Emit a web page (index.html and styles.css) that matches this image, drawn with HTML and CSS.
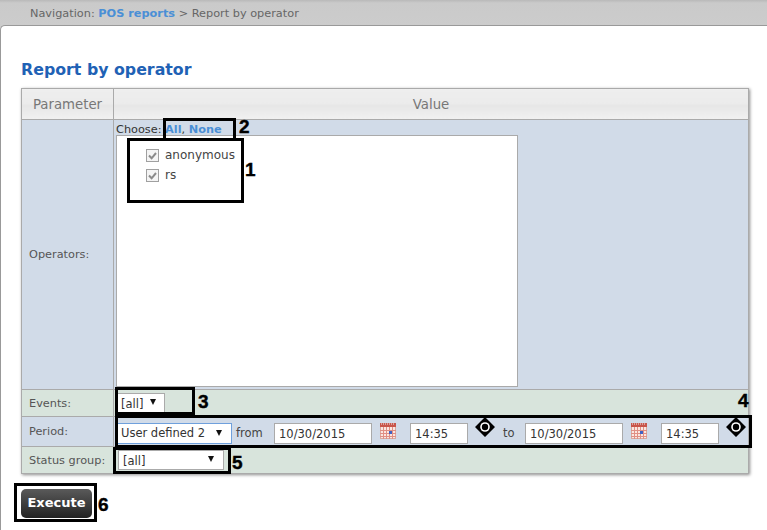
FILE: index.html
```html
<!DOCTYPE html>
<html lang="en">
<head>
  <meta charset="UTF-8">
  <title>Report by operator</title>
  <link rel="stylesheet" href="styles.css">
</head>
<body>
  <svg class="defs" width="0" height="0">
    <symbol id="calendar" viewBox="0 0 16 16">
      <rect x="0.5" y="0.5" width="15" height="15" fill="#fbe6e0" stroke="#d9a9a0"/>
      <rect x="0" y="0" width="16" height="4" fill="#c8554a"/>
      <path d="M1 1h1M3 1h1M5 1h1M7 1h1M9 1h1M11 1h1M13 1h1" stroke="#eee" stroke-width="1"/>
      <path d="M0 7.5h16M0 10.5h16M0 13.5h16M3.5 4v12M6.5 4v12M9.5 4v12M12.5 4v12" stroke="#e08f84" stroke-width="1"/>
      <rect x="9" y="8" width="3" height="3" fill="#3f63c4"/>
    </symbol>
    <symbol id="move" viewBox="0 0 20 20">
      <path d="M10 0l6 6H4zM10 20l-6-6h12zM0 10l6-6v12zM20 10l-6 6V4z" fill="#000"/>
      <circle cx="10" cy="10" r="6.5" fill="#000"/>
      <circle cx="10" cy="10" r="4.8" fill="#fff"/>
      <circle cx="10" cy="10" r="3.2" fill="#000"/>
    </symbol>
    <symbol id="check" viewBox="0 0 13 13">
      <rect x="0.5" y="0.5" width="12" height="12" fill="#f4f4f4" stroke="#a0a0a0"/>
      <path d="M3 6.5l2.6 2.8L10 4" fill="none" stroke="#8a8a8a" stroke-width="2"/>
    </symbol>
  </svg>

  <div class="topbar">
    Navigation: <a href="#">POS reports</a> &gt; Report by operator
  </div>

  <div class="content">
    <h1>Report by operator</h1>

    <table class="report">
      <tr class="head">
        <th class="col-name">Parameter</th>
        <th>Value</th>
      </tr>
      <tr class="row-blue row-operators">
        <td class="col-name">Operators:</td>
        <td class="operators-cell">
          <div class="choose">Choose: <a href="#">All</a>, <a href="#">None</a></div>
          <div class="operators-list">
            <label class="operator"><svg class="check"><use href="#check"/></svg>anonymous</label>
            <label class="operator"><svg class="check"><use href="#check"/></svg>rs</label>
          </div>
        </td>
      </tr>
      <tr class="row-green row-events">
        <td class="col-name">Events:</td>
        <td><span class="select select-events">[all]</span></td>
      </tr>
      <tr class="row-blue row-period">
        <td class="col-name">Period:</td>
        <td>
          <div class="period">
            <span class="select select-period">User defined 2</span>
            <span class="word-from">from</span>
            <input class="field field-date" value="10/30/2015">
            <svg class="calendar"><use href="#calendar"/></svg>
            <input class="field field-time" value="14:35">
            <svg class="move"><use href="#move"/></svg>
            <span class="word-to">to</span>
            <input class="field field-date" value="10/30/2015">
            <svg class="calendar"><use href="#calendar"/></svg>
            <input class="field field-time" value="14:35">
            <svg class="move"><use href="#move"/></svg>
          </div>
        </td>
      </tr>
      <tr class="row-green row-status">
        <td class="col-name">Status group:</td>
        <td><span class="select select-status">[all]</span></td>
      </tr>
    </table>

    <button class="execute">Execute</button>
  </div>

  <!-- callouts drawn on top of the screenshot -->
  <div class="callout box-1"></div>
  <div class="callout box-2"></div>
  <div class="callout box-3"></div>
  <div class="callout box-4"></div>
  <div class="callout box-5"></div>
  <div class="callout box-6"></div>
  <span class="num num-1">1</span>
  <span class="num num-2">2</span>
  <span class="num num-3">3</span>
  <span class="num num-4">4</span>
  <span class="num num-5">5</span>
  <span class="num num-6">6</span>
</body>
</html>
```

FILE: styles.css
```css
html, body {
  height: 100%;
}

body {
  margin: 0;
  position: relative;
  overflow: hidden;
  font-family: "DejaVu Sans", sans-serif;
  font-size: 11.3px;
  color: #444;
  background: #ccc;
}

a {
  color: #4a8fd6;
  font-weight: bold;
  text-decoration: none;
}

.defs {
  position: absolute;
}

.topbar {
  height: 25px;
  box-sizing: border-box;
  padding: 7px 0 0 30px;
  line-height: 14px;
  color: #666;
  background: linear-gradient(#b9b9b9, #cacaca 3px, #cccccc);
}

.content {
  height: 505px;
  box-sizing: border-box;
  padding: 34px 18px 0 20px;
  background: #fff;
  border-top: 1px solid #999;
  border-left: 1px solid #999;
  border-top-left-radius: 5px;
}

h1 {
  margin: 0 0 8px;
  font-size: 15.8px;
  line-height: 20px;
  color: #1f62b5;
}

.report {
  width: 728px;
  table-layout: fixed;
  border-collapse: collapse;
  box-shadow: 1px 1px 3px rgba(0, 0, 0, 0.45);
}

.report th,
.report td {
  padding: 0;
  border: 1px solid #aaa;
}

.col-name {
  width: 91px;
}

td.col-name {
  padding-left: 7px;
  color: #555;
}

.head th {
  height: 30px;
  font-size: 13.3px;
  font-weight: normal;
  color: #777;
  background: linear-gradient(#eeeeee, #ebebeb 50%, #e6e6e6 52%, #f1f1f1);
}

.row-blue td {
  background: #d1dbe8;
}

.row-green td {
  background: #d8e4dc;
}

.row-operators {
  height: 270px;
}

.row-events {
  height: 27px;
}

.row-period {
  height: 30px;
}

.row-status {
  height: 27px;
}

.operators-cell {
  vertical-align: top;
}

.choose {
  height: 15px;
  padding-left: 2px;
  line-height: 20px;
  color: #333;
}

.operators-list {
  width: 402px;
  height: 252px;
  box-sizing: border-box;
  margin-left: 2px;
  padding-top: 9px;
  background: #fff;
  border: 1px solid #aaa;
}

.operator {
  display: flex;
  align-items: center;
  height: 20px;
  padding-left: 29px;
  font-size: 12px;
  color: #444;
}

.check {
  width: 13px;
  height: 13px;
  margin-right: 6px;
}

.select {
  display: block;
  position: relative;
  box-sizing: border-box;
  height: 21px;
  padding-left: 4px;
  line-height: 19px;
  font-size: 11.5px;
  color: #333;
  background: #fff;
  border: 1px solid #aaa;
}

.select::after {
  content: "";
  position: absolute;
  right: 9px;
  top: 6px;
  border-left: 3.5px solid transparent;
  border-right: 3.5px solid transparent;
  border-top: 6px solid #111;
}

.select-events {
  width: 49px;
  height: 20px;
  margin-left: 2px;
  line-height: 20px;
}

.select-events::after {
  right: 8px;
  top: 5px;
}

.select-period {
  width: 116px;
  border-color: #6fa0dc;
}

.select-status {
  width: 106px;
  height: 20px;
  margin-left: 4px;
  line-height: 20px;
}

.select-status::after {
  top: 5px;
}

.period {
  display: flex;
  align-items: flex-start;
  height: 29px;
  padding: 6px 0 0 2px;
  box-sizing: border-box;
}

.word-from {
  margin: 3px 0 0 4px;
  width: 38px;
  font-size: 11.5px;
}

.word-to {
  margin: 3px 0 0 8px;
  width: 22px;
  font-size: 11.5px;
}

.field {
  box-sizing: border-box;
  height: 21px;
  padding: 0 4px;
  font-family: "DejaVu Sans", sans-serif;
  font-size: 11.5px;
  color: #333;
  background: #fff;
  border: 1px solid #aaa;
}

.field-date {
  width: 98px;
}

.field-time {
  width: 58px;
}

.calendar {
  width: 16px;
  height: 16px;
  margin: 0 14px 0 8px;
}

.move {
  width: 20px;
  height: 20px;
  margin: -6px 0 0 7px;
}

.execute {
  display: block;
  width: 71px;
  height: 29px;
  margin-top: 15px;
  padding: 0 0 2px;
  font-family: "DejaVu Sans", sans-serif;
  font-size: 13px;
  font-weight: bold;
  color: #fff;
  background: linear-gradient(#5a5a5a, #222);
  border: none;
  border-radius: 5px;
}

.callout {
  position: absolute;
  box-sizing: border-box;
  border: 3px solid #000;
}

.box-1 { left: 127px; top: 138px; width: 117px; height: 65px; }
.box-2 { left: 163px; top: 118px; width: 73px; height: 20px; border-bottom: none; }
.box-3 { left: 115px; top: 387px; width: 80px; height: 28px; }
.box-4 { left: 115px; top: 415px; width: 637px; height: 33px; }
.box-5 { left: 113px; top: 447px; width: 118px; height: 27px; }
.box-6 { left: 14px; top: 483px; width: 83px; height: 39px; }

.num {
  position: absolute;
  font-family: "Liberation Sans", sans-serif;
  font-size: 19px;
  font-weight: bold;
  line-height: 20px;
  color: #000;
  -webkit-text-stroke: 0.4px #000;
}

.num-1 { left: 245px; top: 160px; }
.num-2 { left: 239px; top: 117px; }
.num-3 { left: 198px; top: 392px; }
.num-4 { left: 738px; top: 391px; }
.num-5 { left: 232px; top: 453px; }
.num-6 { left: 98px; top: 495px; }
```
